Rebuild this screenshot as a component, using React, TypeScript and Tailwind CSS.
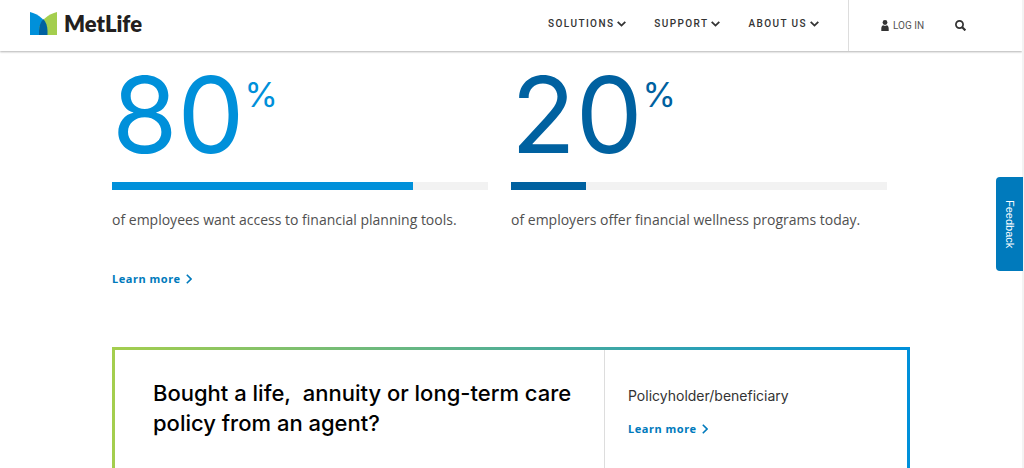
import React from 'react';

function Logo() {
  return (
    <a href="#" aria-label="MetLife" className="flex items-center gap-[7px]">
      <svg viewBox="0 0 27 23" className="h-[23px] w-[27px]" aria-hidden="true">
        <path d="M0 0C8 2 17.500 8 17.500 19V23H0Z" fill="#0090da" />
        <path d="M27 0C19 2 9 8 9 19V23H27Z" fill="#a4ce4e" />
        <path d="M13.300 7C10.600 10.200 9 14 9 19V23H17.500V19C17.500 14 16 10.200 13.300 7Z" fill="#0061a0" />
      </svg>
      <span className="font-['Lato'] text-[22px] leading-[22px] font-extrabold text-[#231f20]">MetLife</span>
    </a>
  );
}

function Chevron({ className }: { className: string }) {
  return (
    <svg viewBox="0 0 9 6" className={className} fill="none" stroke="currentColor" strokeWidth="1.8" aria-hidden="true">
      <path d="M0.700 0.800L4.500 4.600L8.300 0.800" />
    </svg>
  );
}

function LearnMore() {
  return (
    <a href="#" className="flex items-center gap-[5px] font-['Noto_Sans',sans-serif] text-[11px] leading-4 font-bold tracking-wider text-[#007abc]">
      Learn more
      <svg viewBox="0 0 6 10" className="h-2.5 w-1.5" fill="none" stroke="currentColor" strokeWidth="1.6" aria-hidden="true">
        <path d="M0.800 0.800L5 5L0.800 9.200" />
      </svg>
    </a>
  );
}

type StatProps = { value: number; text: string; color: string; bar: string };

function Stat({ value, text, color, bar }: StatProps) {
  return (
    <div className="pr-[23px]">
      <p className={`flex items-start font-['Inter',sans-serif] ${color}`}>
        <span className="text-[106px] leading-[102px] font-normal">{value}</span>
        <span className="pt-3 text-[34px] leading-[38px] font-normal">%</span>
      </p>
      <div className="mt-4 h-2 bg-[#f2f2f2]">
        <div className={`h-full ${bar}`} style={{ width: `${value}%` }} />
      </div>
      <p className="mt-5 font-['Open_Sans',sans-serif] text-sm leading-5 text-[#505050]">{text}</p>
    </div>
  );
}

const menus = ['SOLUTIONS', 'SUPPORT', 'ABOUT US'];

export default function App() {
  return (
    <div className="h-screen overflow-hidden border-r-2 border-[#f3f3f3] bg-white font-['Inter',sans-serif]">
      <header className="relative flex h-[51px] items-stretch justify-between bg-white pl-[30px] shadow-[0_1px_2px_rgba(0,0,0,0.3)]">
        <div className="flex items-center pb-1">
          <Logo />
        </div>
        <div className="flex">
          <nav className="flex items-center gap-7 pr-[29px] pb-1">
            {menus.map((m) => (
              <button key={m} type="button" className="flex items-center gap-[3px] font-['Roboto',sans-serif] text-[10px] leading-4 font-medium tracking-[0.14em] text-[#333]">
                {m}
                <Chevron className="h-1.5 w-[9px]" />
              </button>
            ))}
          </nav>
          <div className="flex w-[174px] items-center border-l border-[#ddd] pl-8 text-[#333]">
            <a href="#" className="flex items-center gap-1 font-['Roboto',sans-serif] text-[10px] leading-4 text-[#555]">
              <svg viewBox="0 0 8 11" className="h-[11px] w-2" fill="#333" aria-hidden="true">
                <circle cx="4" cy="2.500" r="2.400" />
                <path d="M0.300 11V8.500C0.300 6.500 1.300 5.500 2.200 5.200C3.300 5.900 4.700 5.900 5.800 5.200C6.700 5.500 7.700 6.500 7.700 8.500V11Z" />
              </svg>
              LOG IN
            </a>
            <button type="button" aria-label="Search" className="ml-[31px]">
              <svg viewBox="0 0 11 11" className="size-[11px]" fill="none" stroke="currentColor" aria-hidden="true">
                <circle cx="4.500" cy="4.500" r="3.600" strokeWidth="1.700" />
                <path d="M7.200 7.200L10.400 10.400" strokeWidth="2.200" />
              </svg>
            </button>
          </div>
        </div>
      </header>

      <main className="mx-auto max-w-[798px] pt-[13px]">
        <section>
          <div className="grid grid-cols-2">
            <Stat value={80} text="of employees want access to financial planning tools." color="text-[#0090da]" bar="bg-[#0090da]" />
            <Stat value={20} text="of employers offer financial wellness programs today." color="text-[#0061a0]" bar="bg-[#0061a0]" />
          </div>
          <div className="mt-[41px] flex">
            <LearnMore />
          </div>
        </section>

        <section className="mt-[60px] grid h-60 grid-cols-[489fr_303fr] border-3 [border-image:linear-gradient(to_right,#a4ce4e,#0090da)_1]">
          <div className="pt-7 pl-[38px]">
            <h2 className="font-['Inter',sans-serif] text-[22px] leading-[30px] font-medium text-black">
              Bought a life,&nbsp; annuity or long-term care
              <br />
              policy from an agent?
            </h2>
          </div>
          <div className="border-l border-[#ddd] pt-9 pl-[23px]">
            <h3 className="mb-[15px] text-sm leading-5 font-normal text-[#333]">Policyholder/beneficiary</h3>
            <div className="flex">
              <LearnMore />
            </div>
          </div>
        </section>
      </main>

      <button type="button" className="fixed top-[177px] right-px flex h-[94px] w-[27px] items-center justify-center rounded-l-sm bg-[#007abc] font-['Liberation_Sans',sans-serif] text-[11px] text-white [writing-mode:vertical-rl]">
        Feedback
      </button>
    </div>
  );
}
